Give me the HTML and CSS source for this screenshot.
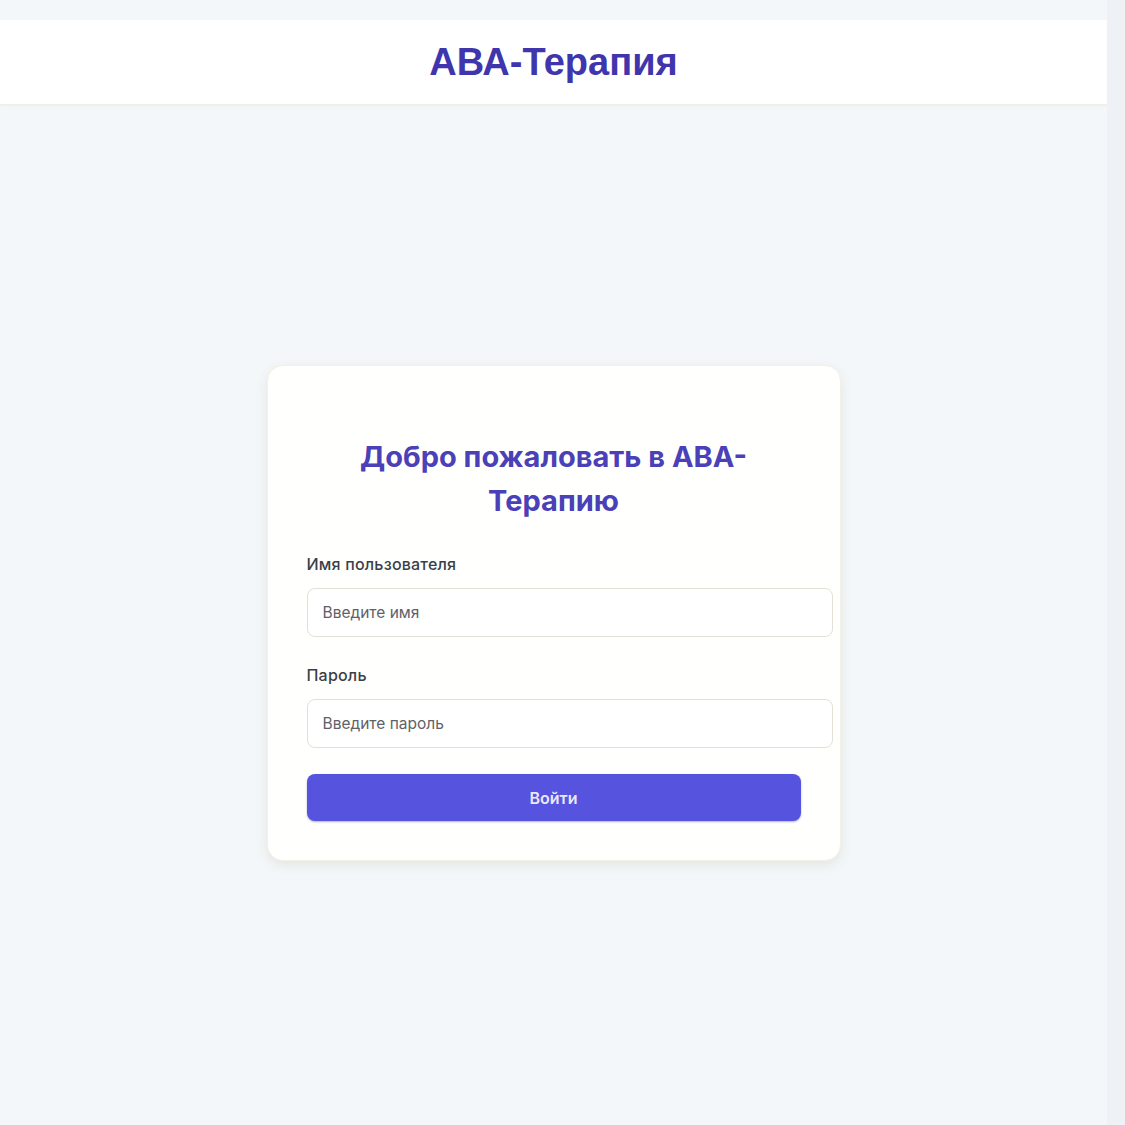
FILE: index.html
```html
<!DOCTYPE html>
<html lang="ru">
<head>
    <meta charset="UTF-8">
    <meta name="viewport" content="width=device-width, initial-scale=1.0">
    <title>АВА-Терапия — Вход</title>
    <link rel="stylesheet" href="styles.css">
</head>
<body>
    <div class="page">
        <header class="topbar">
            <h1 class="brand">АВА-Терапия</h1>
        </header>

        <main class="main">
            <form class="login-card">
                <h2>Добро пожаловать в АВА-Терапию</h2>

                <label for="username">Имя пользователя</label>
                <input type="text" id="username" placeholder="Введите имя">

                <label for="password">Пароль</label>
                <input type="password" id="password" placeholder="Введите пароль">

                <button type="submit" class="login-btn">Войти</button>
            </form>
        </main>
    </div>
    <div class="scroll-track"></div>
</body>
</html>
```

FILE: styles.css
```css
html, body {
    margin: 0;
    padding: 0;
    height: 100%;
}

body {
    display: flex;
    background-color: #eef1f5;
    font-family: Inter, "Liberation Sans", sans-serif;
    color: #3a3f4a;
}

.page {
    flex: 1;
    display: flex;
    flex-direction: column;
    padding-top: 20px;
    background-color: #f4f7f9;
}

.scroll-track {
    width: 18px;
    background-color: #eef1f5;
}

/* Header */
.topbar {
    height: 84px;
    background-color: #fff;
    display: flex;
    align-items: center;
    justify-content: center;
    border-bottom: 1px solid #f0efe6;
    box-shadow: 0 1px 3px rgba(120, 110, 60, 0.06);
}

.brand {
    margin: 0;
    font-family: "Liberation Sans", Arial, sans-serif;
    font-size: 38px;
    font-weight: bold;
    color: #3f36ae;
}

/* Login card */
.main {
    flex: 1;
    display: flex;
    align-items: center;
    justify-content: center;
    padding-bottom: 4px;
}

.login-card {
    width: 494px;
    padding: 39px;
    background-color: #fffffd;
    border-radius: 16px;
    border: 1px solid #f3f1e6;
    box-shadow: 0 4px 12px rgba(90, 80, 40, 0.10);
}

.login-card h2 {
    margin: 30px 0 32px;
    text-align: center;
    font-size: 29px;
    line-height: 44px;
    font-weight: 700;
    color: #4a40b8;
}

.login-card label {
    display: block;
    font-size: 16px;
    font-weight: 500;
    line-height: 19px;
    letter-spacing: 0.2px;
    margin-bottom: 14px;
    color: #3a3f4a;
}

.login-card input {
    display: block;
    width: 100%;
    padding: 15px;
    margin: 0 0 29px;
    border: 1px solid #e3e1d6;
    border-radius: 8px;
    font-family: Inter, "Liberation Sans", sans-serif;
    font-size: 15.5px;
    line-height: 17px;
    color: #333;
    background-color: #fff;
}

.login-card input::placeholder {
    color: #5f6168;
}

.login-card input:last-of-type {
    margin-bottom: 26px;
}

.login-btn {
    display: block;
    width: 100%;
    height: 47px;
    border: none;
    border-radius: 8px;
    background-color: #5653df;
    color: #e9e8fb;
    font-family: Inter, "Liberation Sans", sans-serif;
    font-size: 16px;
    font-weight: 600;
    cursor: pointer;
    box-shadow: 0 1px 2px rgba(40, 30, 120, 0.35);
}
```
